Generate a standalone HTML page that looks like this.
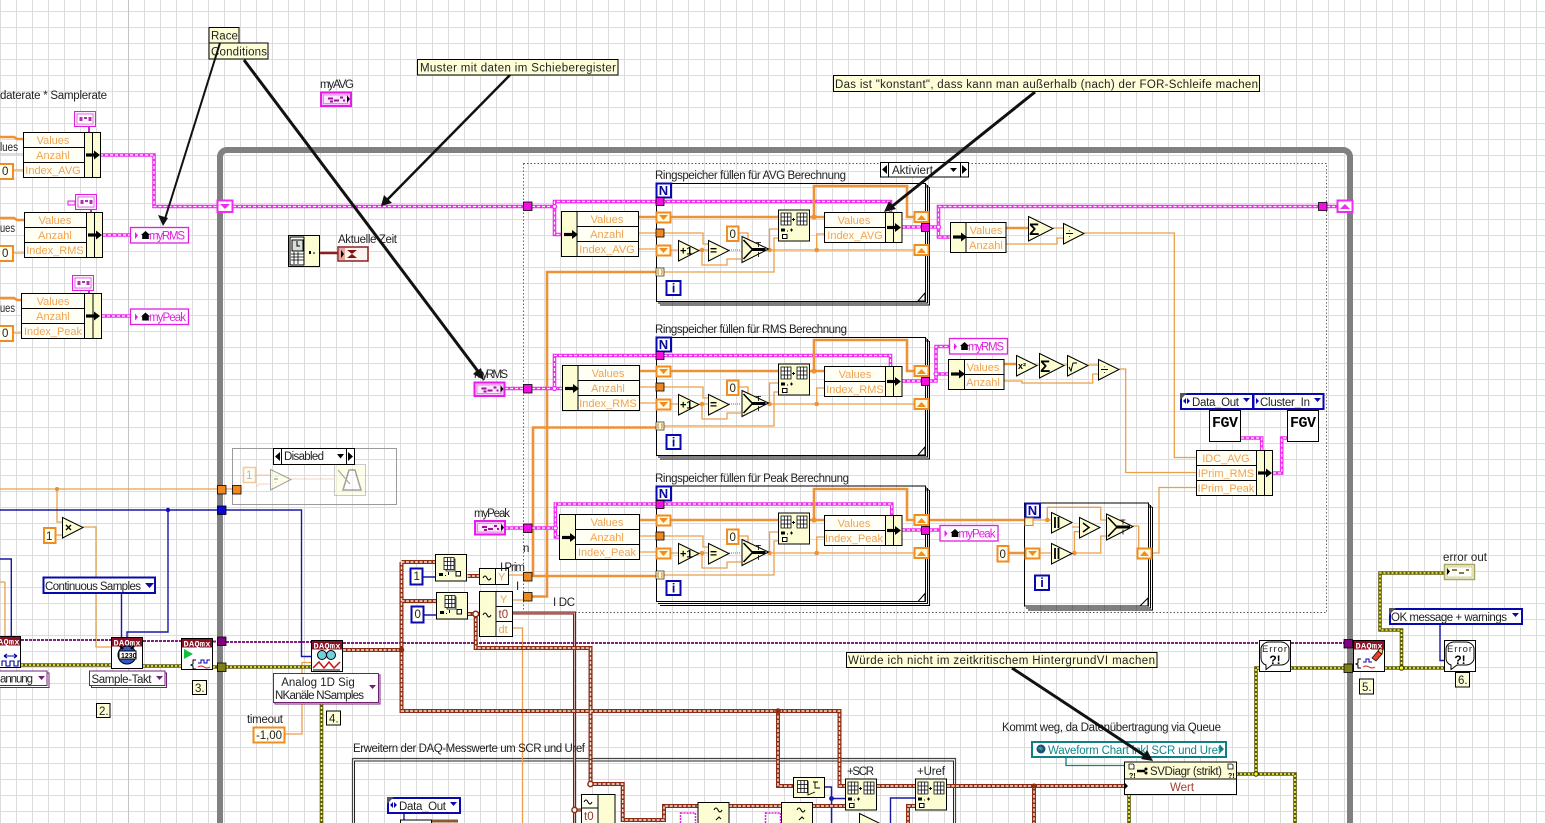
<!DOCTYPE html>
<html><head><meta charset="utf-8"><style>
html,body{margin:0;padding:0;background:#fff}
body{width:1545px;height:823px;overflow:hidden;background-color:#fff;background-image:linear-gradient(to right,#dcdcdc 1px,transparent 1px),linear-gradient(to bottom,#dcdcdc 1px,transparent 1px);background-size:16px 16px;background-position:0 11px}
svg{display:block;position:absolute;left:0;top:0}
text{font-family:"Liberation Sans",sans-serif;font-size:11.5px;fill:#222}
.m{text-anchor:middle}.o{fill:#f0a352;font-size:11px}.mg{fill:#e020e0}.bl{fill:#111}
.bd{font-weight:bold;fill:#000}
.cr{fill:#fdfdd4;stroke:#000}.wc{fill:#fffff6;stroke:#000}.b{fill:none;stroke:#000}
.n{fill:#fdfdd8;stroke:#000}
.c{fill:#fffff2;stroke:#f08c20;stroke-width:2}
.cb{fill:#fffff2;stroke:#0808b0;stroke-width:2}
.e{fill:#fff;stroke:#0808b0;stroke-width:2}
.tri{fill:#fdfdd4;stroke:#000}
.pk{fill:none;stroke:#f02cf0;stroke-width:3.6}.pk2{fill:none;stroke:#fff;stroke-width:1.2;stroke-dasharray:3 2}
.br{fill:none;stroke:#8c2c14;stroke-width:4}.br2{fill:none;stroke:#f7e6d8;stroke-width:1.4;stroke-dasharray:3 1.5}
.ye{fill:none;stroke:#5c5c10;stroke-width:3.6}.ye2{fill:none;stroke:#ffff40;stroke-width:1.6;stroke-dasharray:2 2}
.pu{fill:none;stroke:#80207f;stroke-width:2;stroke-dasharray:3 1}
.ot{fill:none;stroke:#eb9f4a;stroke-width:1.3}
.oT{fill:none;stroke:#ee9238;stroke-width:2.6}
.bw{fill:none;stroke:#1818a8;stroke-width:1.4}
.to{fill:#f08820;stroke:#000;stroke-width:.8}
.tp{fill:#f010e0;stroke:#000;stroke-width:.8}
.sr{fill:#fffbe0;stroke:#f08c20;stroke-width:2}
.sa{fill:#f08c20}
.ar{stroke:#111;fill:none}
.hd{fill:#fff;font-size:8.5px;font-weight:bold;font-family:"Liberation Mono",monospace;text-anchor:middle}
</style></head><body>
<svg width="1545" height="823" viewBox="0 0 1545 823">
<defs>
<path id="w-pk" d="M100 155H154V206.5H217M103 235H130M102 316H130M233 206.5H523M532 206.5H554.5V201.5H890.5V212M554.5 206.5V234.5H561M902 227H921M929 227H938.5V206.5H1318M938.5 227V237H950M1327 206.5H1337M505 388.5H523M532 388.5H554.5V355.5H890.5V366M554.5 388.5H562M902 381H921M929 381H936V346.5H949M936 374H948M505 528H523M532 528H555.4V504H891.8V515M555.4 528V537H559M902 530H921M929 530H940M1241 438H1261.7V450M1273 473H1281.7V438H1287"/>
<path id="w-br" d="M343 650H401.5M401.5 562V711H839.5V786H845M401.5 562H435M401.5 601H436M778 711V786H793M877 786H915M947 786H1124M1034 786V823M467.5 576H479M467.5 614H479M475.7 614V648H590.5V784H622.7V820H664V806H698M729 806H781M812 806H845M915 806H908V823"/>
<path id="w-ye" d="M21 665H111M143 666H181M213 667H217M226 667H311M321.5 703V823M1259 668H1256V774M1236 774H1295V823M1129 795V823M1290 668H1344M1385 668H1444M1401.5 668V630H1380V573H1444"/>
<g id="term"><rect x="1" y="1" width="30" height="13.5" fill="#f8c8f8" stroke="#e81ce8" stroke-width="2"/><rect x="3.5" y="3.5" width="24" height="8.5" fill="#ffe6ff" stroke="#d850d8" stroke-width=".6"/><path d="M8 6h5v2H8zM14 8h5v2h-5zM10 9h3v2h-3zM20 5h3v2h-3zM23 8h2v2h-2z" fill="#a010a0"/><path d="M27 4l3 3.5-3 3.5z" fill="#000"/></g>
<g id="lv"><rect x=".5" y=".5" width="21" height="15" fill="#fde8fd" stroke="#e020e0"/><rect x="3" y="3" width="16" height="10" fill="#fff" stroke="#d040d0" stroke-width=".7"/><path d="M5.5 6h3v4h-3zM10 6h3v2h-3zM14.5 6h3v4h-3z" fill="#b030b0"/></g>
<g id="arw"><path d="M0 0h10" stroke="#000" stroke-width="3.2"/><path d="M8 -4.5l6 4.5-6 4.5z" fill="#000"/></g>
<g id="gr"><path d="M.5.5h10v12H.5zM.5 4.5h10M.5 8.5h10M3.8.5v12M7.2.5v12" fill="#fff" stroke="#000" stroke-width=".8"/></g>
<g id="ra"><rect x=".5" y=".5" width="31" height="31" class="cr"/><use href="#gr" x="2.5" y="3"/><use href="#gr" x="18.5" y="3"/><path d="M14 10h3M15.5 8.5v3" stroke="#000"/><path d="M3 19h4v3H3z" fill="#000"/><path d="M9 21h1v1H9zM13 19h1v3h-1zM12 20h3v1h-3z" fill="#000"/><rect x="4.5" y="26" width="4.5" height="4" fill="#fff" stroke="#000" transform="translate(0 -1)"/></g>
<g id="ia"><rect x=".5" y=".5" width="31" height="26.5" class="cr"/><path d="M11 5h9v12h-9z" fill="#fff" stroke="#000" stroke-width=".7"/><path d="M9 3.5h10v12H9zM9 7.5h10M9 11.5h10M12.4 3.5v12M15.8 3.5v12" fill="#fff" stroke="#000" stroke-width=".8"/><path d="M4 19h4v3H4zM10 21h1v1h-1zM13 18h1v3h-1z" fill="#000"/><rect x="21" y="17.5" width="4.5" height="4.5" fill="#fff" stroke="#000"/></g>
<g id="sel"><path d="M.5.5L27 13 .5 26.5z" class="tri"/><path d="M2 4l9 9.5L2 23" fill="none" stroke="#000" stroke-width="1.6"/><path d="M10 13.5h14" stroke="#000" stroke-width="3"/><path d="M17 6v5M14.5 6.5h5M17 16v5" stroke="#000" stroke-width=".8" fill="none"/></g>
<g id="err"><rect x=".5" y=".5" width="31" height="31" fill="#fff" stroke="#000"/><path d="M7 25c-3-1-5-3-5-7V9c0-4 4-7 8-7h12c4 0 8 3 8 7v9c0 4-4 7-8 7h-9l-6 4.500z" fill="#fff" stroke="#000"/></g>
<g id="dq"><rect x=".5" y=".5" width="31" height="31" fill="#fff" stroke="#000"/><rect x="1" y="1" width="30" height="8.500" fill="#8a1024"/></g>
</defs>

<path d="M128.500 0V823" stroke="#c4c4c4"/>

<!-- frames -->
<path d="M220 823V157a7 7 0 0 1 7-7H1343a7 7 0 0 1 7 7V823" fill="none" stroke="#808080" stroke-width="6"/>
<rect x="523.500" y="163.500" width="803" height="449" fill="none" stroke="#555" stroke-dasharray="1.500 2" stroke-width=".9"/>
<path d="M352.500 823V758.500H955.500V823" fill="none" stroke="#444" stroke-width="1.200"/><path d="M354.500 823V761H953.500V823" fill="none" stroke="#222"/>
<rect x="232.500" y="448.500" width="164" height="56" fill="none" stroke="#9a9a9a"/>

<!-- thin wires -->
<path class="ot" d="M0 489H217M226 489H232M57 489V522H62M55 535H62M83 527H96V647H111M5 582H0M5 582V636M285 734H302V662.500H311M512.500 628H522.500V823M1084 233H1174.300V457.500H1196M1006 244H1057V238H1063M1053 228H1063M1119 369H1125.700V472.500H1196M1004 381H1022V383H1092.700V374H1098M1037 365H1039M1064 365H1067M1088 365H1098M1196 487.500H1159V553H1152M509 575H523M512.500 600H523M1033 520H1051M1047.300 520V507.300H1100.800V520H1106M1040 553H1051M1072 553H1100.800V536H1106M1074.400 553V531.700H1079M1072 527H1079M1133 526H1138.700V548"/>
<path class="oT" d="M532 576H656M533 576V427.500H656M532 596.500H547V272H656M1006 228H1028M1004 364H1016M1008 553H1025M929 520H1025M0 137H14L17 139H24M0 218H14L17 220H24M0 298H14L17 300H22"/>
<path class="ot" d="M13 170H23M13 253H24M13 333H21"/>
<path class="bw" d="M0 510H217M226 510H301.500V656.500H311M168 510V632H127V637M121.500 593V637M0 559H11.300V636M423 577H436M423 615H436M825 787H831.500V823M831.500 798.500H845M915 798H890.500V823M1440 624V660.500H1444M404 813V820"/>
<path d="M1066 757V765.500H1124" fill="none" stroke="#108080" stroke-width="1.300"/>
<path class="pu" d="M21 640H111M143 641H181M213 641.500H217M226 642H311M343 643H1344"/>
<path d="M319 253H338" stroke="#8a2020" stroke-width="2.500"/>
<path d="M512.500 613H574.500V823M574.500 810H581" fill="none" stroke="#7a1a10" stroke-width="3"/>
<path d="M512.500 613H574.500V823M574.500 810H581" fill="none" stroke="#f0d8d0" stroke-width=".8"/>

<!-- big wires -->
<use href="#w-ye" class="ye"/><use href="#w-ye" class="ye2"/>
<use href="#w-br" class="br"/><use href="#w-br" class="br2"/>
<use href="#w-pk" class="pk"/><use href="#w-pk" class="pk2"/>
<path d="M432 821h26" stroke="#8c5a30" stroke-width="3"/>

<!-- top-left -->
<text x="0" y="99" textLength="107">daterate * Samplerate</text>
<path d="M0 154H23" stroke="#aaa" stroke-width=".8"/><text x="0" y="151" textLength="18" lengthAdjust="spacingAndGlyphs">lues</text>
<text x="0" y="232" textLength="15" lengthAdjust="spacingAndGlyphs">ues</text>
<text x="0" y="312" textLength="15" lengthAdjust="spacingAndGlyphs">ues</text>
<rect x="-3" y="164" width="16" height="15" class="c"/><text x="2" y="175">0</text>
<rect x="-3" y="246" width="16" height="15" class="c"/><text x="2" y="257">0</text>
<rect x="-3" y="326" width="16" height="15" class="c"/><text x="2" y="337">0</text>

<use href="#lv" x="74" y="111"/><path d="M89 127v6" stroke="#e020e0" stroke-width="2"/>
<use href="#lv" x="75" y="194"/><path d="M68 201h7v4h-7z" fill="#fde8fd" stroke="#e020e0"/><path d="M91 210v3" stroke="#e020e0" stroke-width="2"/>
<use href="#lv" x="72" y="275"/><path d="M89 291v3" stroke="#e020e0" stroke-width="2"/>

<!-- left bundles -->
<rect x="23.500" y="132.500" width="77" height="45" class="cr"/><rect x="23.500" y="132.500" width="61" height="45" class="wc"/><path class="b" d="M23.500 147.500h61M23.500 162.500h61M92.500 132.500v45"/>
<text class="o m" x="53" y="144">Values</text><text class="o m" x="53" y="159">Anzahl</text><text class="o m" x="53" y="174">Index_AVG</text>
<use href="#arw" x="86" y="155"/>
<rect x="24.500" y="212.500" width="78" height="45" class="cr"/><rect x="24.500" y="212.500" width="62" height="45" class="wc"/><path class="b" d="M24.500 227.500h62M24.500 242.500h62M94.500 212.500v45"/>
<text class="o m" x="55" y="224">Values</text><text class="o m" x="55" y="239">Anzahl</text><text class="o m" x="55" y="254">Index_RMS</text>
<use href="#arw" x="88" y="235"/>
<rect x="21.500" y="293.500" width="80" height="45" class="cr"/><rect x="21.500" y="293.500" width="63" height="45" class="wc"/><path class="b" d="M21.500 308.500h63M21.500 323.500h63M93 293.500v45"/>
<text class="o m" x="53" y="305">Values</text><text class="o m" x="53" y="320">Anzahl</text><text class="o m" x="53" y="335">Index_Peak</text>
<use href="#arw" x="86" y="316"/>

<!-- locals -->
<rect x="130.500" y="227.500" width="58" height="15.500" fill="#fffaff" stroke="#e020e0" stroke-width="1.300"/><path d="M135 232l3 3.500-3 3.500z" fill="#e020e0"/><path d="M141 235l4.500-4 4.500 4h-1.200v4h-6.600v-4z" fill="#000"/><text class="mg" x="149" y="239.500" textLength="36">myRMS</text>
<rect x="130.500" y="309" width="58" height="15.500" fill="#fffaff" stroke="#e020e0" stroke-width="1.300"/><path d="M135 313.500l3 3.500-3 3.500z" fill="#e020e0"/><path d="M141 316.500l4.500-4 4.500 4h-1.200v4h-6.600v-4z" fill="#000"/><text class="mg" x="149" y="321" textLength="37">myPeak</text>
<rect x="949.500" y="338.500" width="58" height="15.500" fill="#fffaff" stroke="#e020e0" stroke-width="1.300"/><path d="M954 343l3 3.500-3 3.500z" fill="#e020e0"/><path d="M960 346l4.500-4 4.500 4h-1.200v4h-6.600v-4z" fill="#000"/><text class="mg" x="968" y="350.500" textLength="36">myRMS</text>
<rect x="940" y="525.500" width="58" height="15.500" fill="#fffaff" stroke="#e020e0" stroke-width="1.300"/><path d="M944.500 530l3 3.500-3 3.500z" fill="#e020e0"/><path d="M950.500 533l4.500-4 4.500 4h-1.200v4h-6.600v-4z" fill="#000"/><text class="mg" x="958.500" y="537.500" textLength="37">myPeak</text>

<!-- terminals -->
<text x="320" y="88" textLength="34">myAVG</text><use href="#term" x="320" y="91.500"/>
<text x="474" y="378" textLength="34">myRMS</text><use href="#term" x="473.500" y="381.500"/>
<text x="474" y="517" textLength="36">myPeak</text><use href="#term" x="474" y="520"/>

<!-- Aktuelle Zeit -->
<rect x="288.500" y="235.500" width="31" height="31" fill="#fdfdd4" stroke="#000"/><rect x="290" y="237" width="14" height="28" fill="#fff" stroke="#000"/><rect x="292" y="240" width="11" height="11" fill="#d8e0d8" stroke="#000"/><path d="M297 241v5h3" stroke="#000" fill="none"/><path d="M291 254h13M291 257h13M291 260h13M294 252v12M298 252v12" stroke="#000" stroke-width=".8"/><path d="M309 251h2v3h-2zM313 252.500h2v1h-2z" fill="#000"/>
<text x="338" y="243" textLength="59">Aktuelle Zeit</text>
<rect x="338" y="247" width="30" height="14" fill="#fdf4f0" stroke="#8a2020" stroke-width="1.500"/><rect x="339" y="248" width="6" height="12" fill="#e8a8a0"/><path d="M341 250l3 4-3 4z" fill="#000"/><path d="M347 250h10l-5 4 5 4h-10l5-4z" fill="#8a1010"/>

<!-- Disabled structure -->
<g opacity=".45"><rect x="243.500" y="467.500" width="12" height="15" fill="#fffff2" stroke="#f08c20" stroke-width="1.600"/><text x="246" y="479" style="fill:#666">1</text><path d="M256 475h14M256 486h1l2-2h11M291 479h43" fill="none" stroke="#f0a070"/><path d="M270.500 469.500L291 479.500 270.500 490z" fill="#fdfdd4" stroke="#333"/><path d="M274 479h4M276 476v.5M276 482v.5" stroke="#000"/><rect x="334.500" y="464.500" width="31" height="31" fill="#fdfdd4" stroke="#888"/><path d="M343 490l6-20h6l6 20z" fill="#fff" stroke="#333" stroke-width="1.500"/><path d="M338 470l12 14" stroke="#333"/></g>
<rect x="273.500" y="448.500" width="81" height="16" fill="#fff" stroke="#000"/><path d="M281.500 448.500v16M346.500 448.500v16" stroke="#000"/><path d="M280 452v9l-5-4.500zM348 452v9l5-4.500zM337 454h7l-3.500 4.500z" fill="#000"/><text x="284" y="460" textLength="40">Disabled</text>

<rect x="217.500" y="485.500" width="8.500" height="8.500" class="to"/><rect x="232.500" y="485.500" width="8.500" height="8.500" class="to"/>
<rect x="217.500" y="506" width="8.500" height="8.500" fill="#0808d0" stroke="#000" stroke-width=".8"/>
<rect x="217.500" y="637" width="8.500" height="8.500" fill="#800080" stroke="#000" stroke-width=".8"/>
<rect x="217.500" y="663" width="8.500" height="8.500" fill="#808018" stroke="#000" stroke-width=".8"/>
<circle cx="57" cy="489" r="2" fill="#e09030"/><circle cx="168" cy="510" r="2.200" fill="#1010c0"/>

<!-- mult / const -->
<rect x="44" y="528" width="11.500" height="15" class="c"/><text x="46" y="540">1</text>
<path d="M62.500 517.500L83 527.500 62.500 538z" class="tri"/><path d="M66 525l5 5M71 525l-5 5" stroke="#000" stroke-width="1.300"/>
<rect x="43.500" y="577.500" width="111.500" height="15.500" class="e"/><text x="45" y="590" textLength="96">Continuous Samples</text><path d="M145 583h9l-4.500 5z" fill="#0808b0"/>

<!-- DAQmx icons -->
<use href="#dq" x="-11" y="636"/><text class="hd" x="6" y="644.500" textLength="27">DAQmx</text><path d="M2 666v-5h4v5h4v-5h4v5h4v-5h3M4 656h13M4 656l3-2M4 656l3 2M17 656l-3-2M17 656l-3 2" fill="none" stroke="#0000a0" stroke-width="1.100"/>
<use href="#dq" x="111" y="637"/><text class="hd" x="127" y="645.500" textLength="27">DAQmx</text><circle cx="127" cy="655" r="9" fill="#3058c8" stroke="#000"/><rect x="119" y="651" width="17" height="8" fill="#fff" stroke="#000"/><text x="121" y="658" style="font-size:7px;font-weight:bold;fill:#000">1230</text><path d="M120 646l3 3M134 646l-3 3" stroke="#000" stroke-width="2"/>
<use href="#dq" x="181" y="638"/><text class="hd" x="197" y="646.500" textLength="27">DAQmx</text><path d="M184 649l9 5-9 5z" fill="#10c040"/><path d="M196 660h-3v4l-2 1 2 1v3h3" fill="none" stroke="#000"/><path d="M198 663h3v-3h3v3h3v-3h3" fill="none" stroke="#0000b0"/><path d="M198 667q3-2 6 0t6 0" fill="none" stroke="#d02020"/>
<use href="#dq" x="311" y="640"/><text class="hd" x="327" y="648.500" textLength="27">DAQmx</text><circle cx="322" cy="655" r="4.500" fill="#70d0e0" stroke="#000"/><circle cx="331" cy="655" r="4.500" fill="#70d0e0" stroke="#000"/><path d="M313 668l6-6 5 6 5-6 5 6 6-6" fill="none" stroke="#d01010" stroke-width="1.500"/><path d="M313 670h27" stroke="#000"/>
<use href="#dq" x="1353" y="640"/><text class="hd" x="1369" y="648.500" textLength="27">DAQmx</text><path d="M1372 658l6-7 4 3-6 7z" fill="#f04030" stroke="#000" stroke-width=".7"/><path d="M1378 651l2-3 3 2-1 4z" fill="#f8d060" stroke="#000" stroke-width=".7"/><path d="M1361 659h-3v4l-2 1 2 1v3h3" fill="none" stroke="#000"/><path d="M1363 662h3v-3h3v3h3" fill="none" stroke="#0000b0"/><path d="M1363 667q3-2 6 0t6 0" fill="none" stroke="#d02020"/>

<!-- polymorphic dropdowns -->
<rect x="-4" y="673" width="53" height="14.500" fill="#fff" stroke="#702070"/><rect x="-4" y="671" width="51" height="14.500" fill="#fff" stroke="#702070"/><text x="0" y="682.500" textLength="33">annung</text><path d="M38 676h7l-3.500 4z" fill="#702070"/>
<rect x="91.500" y="673" width="75" height="14.500" fill="#fff" stroke="#702070"/><rect x="89.500" y="671" width="75.500" height="14.500" fill="#fff" stroke="#702070"/><text x="91.500" y="683" textLength="60">Sample-Takt</text><path d="M156 676h7l-3.500 4z" fill="#702070"/>
<rect x="275" y="675" width="105" height="29" fill="#fff" stroke="#702070"/><rect x="273.500" y="673.500" width="105" height="29" fill="#fff" stroke="#702070"/><text class="m" x="318" y="686">Analog 1D Sig</text><text class="m" x="319.500" y="699" textLength="89">NKanäle NSamples</text><path d="M369 685h7l-3.500 4z" fill="#702070"/>

<!-- number notes -->
<rect x="96.500" y="703.500" width="13.500" height="14" class="n"/><text x="99" y="715">2.</text>
<rect x="192.500" y="680.500" width="14" height="14" class="n"/><text x="195" y="692">3.</text>
<rect x="326.500" y="711" width="14" height="14" class="n"/><text x="329" y="722.500">4.</text>
<rect x="1359.500" y="679" width="14" height="15" class="n"/><text x="1362" y="691">5.</text>
<rect x="1455.500" y="672.500" width="14" height="14.500" class="n"/><text x="1458" y="684">6.</text>
<text x="247" y="723" textLength="36">timeout</text>
<rect x="253.500" y="727.500" width="31" height="15" class="c"/><text x="256" y="739" textLength="26">-1,00</text>

<!-- index arrays & waveform -->
<use href="#ia" x="435" y="554"/><use href="#ia" x="436" y="592"/>
<rect x="410.500" y="568.500" width="12" height="16" class="cb"/><text x="413.500" y="580">1</text>
<rect x="411.500" y="606.500" width="12" height="16" class="cb"/><text x="414.500" y="618">0</text>
<rect x="479.500" y="568.500" width="29" height="16" class="cr"/><rect x="495.500" y="568.500" width="13" height="16" fill="#fffff6" stroke="#000"/><path d="M483 578q2-4 4 0t4 0" fill="none" stroke="#000"/><text class="o" x="498" y="580.500">Y</text>
<rect x="479.500" y="591.500" width="33" height="45" class="cr"/><rect x="496" y="591.500" width="16.500" height="45" fill="#fffff6" stroke="#000"/><path d="M496 606.500h16.500M496 621.500h16.500" stroke="#000"/><path d="M483 615q2-4 4 0t4 0" fill="none" stroke="#000"/><text class="o" x="500" y="603">Y</text><text x="498.500" y="618" style="fill:#9a3030">t0</text><text class="o" x="498.500" y="633">dt</text>
<text x="500" y="571" textLength="25">I Prim</text><text x="516" y="590">I</text><text x="523" y="552">n</text><text x="553" y="606" textLength="22">I DC</text>

<rect x="523.500" y="572.500" width="8.500" height="8.500" class="to"/><rect x="523.500" y="592.500" width="8.500" height="8.500" class="to"/>
<rect x="523.500" y="202" width="8.500" height="8.500" class="tp"/><rect x="523.500" y="384.500" width="8.500" height="8.500" class="tp"/><rect x="523.500" y="524" width="8.500" height="8.500" class="tp"/><rect x="1318.500" y="202.500" width="8.500" height="8" class="tp"/>

<!-- loop frames -->
<path class="b" d="M656.500 183.500H925.500V301.500H656.500ZM927.500 185V303H658M929.500 187V305H660M925 185h2M925 187h4M918 301l7-8v8z"/>
<path class="b" d="M656.500 337.500H925.500V455.500H656.500ZM927.500 339V457H658M929.500 341V459H660M925 339h2M925 341h4M918 455l7-8v8z"/>
<path class="b" d="M656.500 486H925.500V601.500H656.500ZM927.500 488V603.500H658M929.500 490V605.500H660M925 488h2M925 490h4M918 601.500l7-8v8z"/>
<path class="b" d="M1024.500 503H1148.500V606H1024.500ZM1150.500 505V608H1026M1152.500 507V610H1028M1148 505h2M1148 507h4M1140 606l8-8v8z"/>
<text x="655" y="179" textLength="191">Ringspeicher füllen für AVG Berechnung</text>
<text x="655" y="333" textLength="192">Ringspeicher füllen für RMS Berechnung</text>
<text x="655" y="482" textLength="194">Ringspeicher füllen für Peak Berechnung</text>

<g id="L">
<path class="oT" d="M639 217H656M671 217H778M810 217H824M814 217V186H907V217H914"/>
<path class="ot" d="M639 233H656M664 233H703V244H708M639 249H656M671 250H678M699 250H708M702 250V265H727V259H741M739 233H748V240M768 250H914M769.500 250V229H778M816.700 250V234H824M664 272H774V238H778"/>
<path d="M729 250H741" stroke="#20a040" stroke-dasharray="1 1"/>
<circle cx="702" cy="250" r="2.300" fill="#ee9238"/><circle cx="769.500" cy="250" r="2.300" fill="#ee9238"/><circle cx="816.700" cy="250" r="2.300" fill="#ee9238"/><circle cx="814" cy="217" r="2.600" fill="#ee9238"/>
<rect x="656.500" y="183.500" width="14.500" height="14" class="e" style="fill:#fff"/><text class="m" x="663.500" y="195" style="font-weight:bold;font-size:13px;fill:#0808a0">N</text>
<rect x="656" y="197.500" width="8" height="8" class="tp"/>
<rect x="656.500" y="212.500" width="14" height="10" class="sr"/><path class="sa" d="M659 215h9l-4.500 5z"/>
<rect x="656.500" y="245.500" width="14" height="10" class="sr"/><path class="sa" d="M659 248h9l-4.500 5z"/>
<rect x="656" y="229" width="8" height="8" class="to"/>
<rect x="656" y="268" width="8" height="8" fill="#fdfdd4" stroke="#222" stroke-width=".7"/><path d="M659 270h-1v4h1M661 270h1v4h-1" stroke="#e08020" fill="none"/>
<path d="M678.500 240.500L699 250.500 678.500 261z" class="tri"/><text class="bd" x="680" y="254.500" style="font-size:11px">+1</text>
<path d="M708.500 240.500L729 250.500 708.500 261z" class="tri"/><text class="bd" x="710" y="254.500" style="font-size:12px">=</text>
<rect x="727" y="226.500" width="11.500" height="14.500" class="c"/><text x="729.500" y="238">0</text>
<use href="#sel" x="741.500" y="236"/>
<use href="#ra" x="778" y="209.500"/>
<rect x="824.500" y="212.500" width="77.500" height="30" class="cr"/><rect x="824.500" y="212.500" width="61" height="30" class="wc"/><path class="b" d="M824.500 227.500h61M893.500 212.500v30"/>
<use href="#arw" x="887" y="227.500"/>
<rect x="914.500" y="212" width="14" height="10" class="sr"/><path class="sa" d="M917 220h9l-4.500-5z"/>
<rect x="914.500" y="245" width="14" height="10" class="sr"/><path class="sa" d="M917 253h9l-4.500-5z"/>
<rect x="921.500" y="223.500" width="8" height="8" class="tp"/>
</g>
<use href="#L" y="154"/><use href="#L" y="303"/>
<text class="o m" x="854" y="224">Values</text><text class="o m" x="855" y="239">Index_AVG</text>
<text class="o m" x="855" y="378">Values</text><text class="o m" x="855" y="393">Index_RMS</text>
<text class="o m" x="854" y="527">Values</text><text class="o m" x="854" y="542">Index_Peak</text>
<rect x="666.500" y="281" width="14" height="14" class="e"/><text class="m" x="673.500" y="292.500" style="font-weight:bold;font-size:13px;fill:#0808a0">i</text>
<rect x="666.500" y="435" width="14" height="14" class="e"/><text class="m" x="673.500" y="446.500" style="font-weight:bold;font-size:13px;fill:#0808a0">i</text>
<rect x="666.500" y="581" width="14" height="14" class="e"/><text class="m" x="673.500" y="592.500" style="font-weight:bold;font-size:13px;fill:#0808a0">i</text>

<!-- unbundles -->
<rect x="561.500" y="211.500" width="77" height="45" class="cr"/><rect x="577" y="211.500" width="61.500" height="45" class="wc"/><path class="b" d="M577 226.500h61.500M577 241.500h61.500"/><use href="#arw" x="564" y="234.500"/>
<text class="o m" x="607" y="223">Values</text><text class="o m" x="607" y="238">Anzahl</text><text class="o m" x="607" y="253">Index_AVG</text>
<rect x="562.500" y="365.500" width="77" height="45" class="cr"/><rect x="578" y="365.500" width="61.500" height="45" class="wc"/><path class="b" d="M578 380.500h61.500M578 395.500h61.500"/><use href="#arw" x="565" y="388.500"/>
<text class="o m" x="608" y="377">Values</text><text class="o m" x="608" y="392">Anzahl</text><text class="o m" x="608" y="407">Index_RMS</text>
<rect x="559.500" y="514.500" width="80" height="45" class="cr"/><rect x="575.500" y="514.500" width="64" height="45" class="wc"/><path class="b" d="M575.500 529.500h64M575.500 544.500h64"/><use href="#arw" x="562" y="537.500"/>
<text class="o m" x="607" y="526">Values</text><text class="o m" x="607" y="541">Anzahl</text><text class="o m" x="607" y="556">Index_Peak</text>

<!-- AVG calc -->
<rect x="950.500" y="222.500" width="55.500" height="30" class="cr"/><rect x="966" y="222.500" width="40" height="30" class="wc"/><path class="b" d="M966 237.500h40"/><use href="#arw" x="953" y="237"/>
<text class="o m" x="986" y="234">Values</text><text class="o m" x="986" y="249">Anzahl</text>
<path d="M1028.500 216.500L1053 228.500 1028.500 241z" class="tri"/><text class="bd" x="1029" y="235" style="font-size:17px">Σ</text>
<path d="M1063.500 223.500L1084 233.500 1063.500 244z" class="tri"/><path d="M1066 233.500h7M1069.500 230.500v.8M1069.500 236v.8" stroke="#000"/>
<!-- RMS calc -->
<rect x="948.500" y="359.500" width="55.500" height="30" class="cr"/><rect x="964.500" y="359.500" width="39.500" height="30" class="wc"/><path class="b" d="M964.500 374.500h39.500"/><use href="#arw" x="951" y="374"/>
<text class="o m" x="983" y="371">Values</text><text class="o m" x="983" y="386">Anzahl</text>
<path d="M1016.500 355.500L1037 365.500 1016.500 376z" class="tri"/><text class="bd" x="1018" y="369" style="font-size:9px">x²</text>
<path d="M1039.500 353.500L1064 365.500 1039.500 378z" class="tri"/><text class="bd" x="1040" y="372" style="font-size:17px">Σ</text>
<path d="M1067.500 355.500L1088 365.500 1067.500 376z" class="tri"/><path d="M1069 367l2 4 2-8h4" fill="none" stroke="#000"/>
<path d="M1098.500 359.500L1119 369.500 1098.500 380z" class="tri"/><path d="M1101 369.500h7M1104.500 366.500v.8M1104.500 372v.8" stroke="#000"/>

<!-- FGV -->
<rect x="1209.500" y="410.500" width="31" height="31" fill="#fff" stroke="#000"/><text class="bd" x="1212" y="427" textLength="26" style="font-family:'Liberation Mono',monospace;font-size:15px">FGV</text>
<rect x="1287.500" y="410.500" width="31" height="31" fill="#fff" stroke="#000"/><text class="bd" x="1290" y="427" textLength="26" style="font-family:'Liberation Mono',monospace;font-size:15px">FGV</text>
<rect x="1181" y="394" width="72" height="15" class="e"/><path d="M1180 393h7l-7 7z" fill="#555"/><path d="M1183 401l3-3v6zM1190 401l-3-3v6z" fill="#0808b0"/><text x="1192" y="406" textLength="47">Data_Out</text><path d="M1243 398h7l-3.500 4z" fill="#0808b0"/>
<rect x="1253.500" y="394" width="70" height="15" class="e"/><path d="M1256 398v6l3-3z" fill="#0808b0"/><text x="1260" y="406" textLength="50">Cluster_In</text><path d="M1314 398h7l-3.500 4z" fill="#0808b0"/>
<rect x="1196.500" y="450.500" width="76" height="45" class="cr"/><rect x="1196.500" y="450.500" width="60" height="45" class="wc"/><path class="b" d="M1196.500 465.500h60M1196.500 480.500h60M1264.500 450.500v45"/><use href="#arw" x="1258" y="473"/>
<text class="o m" x="1226" y="462">IDC_AVG</text><text class="o m" x="1226" y="477">IPrim_RMS</text><text class="o m" x="1226" y="492">IPrim_Peak</text>

<!-- for loop 4 -->
<rect x="997.500" y="546" width="11" height="15.500" class="c"/><text x="999.500" y="558">0</text>
<rect x="1025.500" y="503.500" width="14.500" height="14" class="e"/><text class="m" x="1032.500" y="515" style="font-weight:bold;font-size:13px;fill:#0808a0">N</text>
<rect x="1025" y="518" width="8" height="7.500" fill="#fdfdd4" stroke="#e08020"/>
<circle cx="1047.300" cy="520" r="2.300" fill="#ee9238"/><circle cx="1074.400" cy="553" r="2.300" fill="#ee9238"/>
<path d="M1051.500 512.500L1072 522.500 1051.500 533z" class="tri"/><path d="M1055 517v11M1058.500 517v11" stroke="#000" stroke-width="1.800"/>
<path d="M1051.500 543.500L1072 553.500 1051.500 564z" class="tri"/><path d="M1055 548v11M1058.500 548v11" stroke="#000" stroke-width="1.800"/>
<path d="M1079.500 517.500L1100 527.500 1079.500 538z" class="tri"/><path d="M1083 523l6 4.500-6 4.500" fill="none" stroke="#000" stroke-width="1.500"/>
<use href="#sel" x="1106" y="513.500"/>
<rect x="1025.500" y="548.500" width="14" height="10" class="sr"/><path class="sa" d="M1028 551h9l-4.500 5z"/>
<rect x="1137.500" y="548.500" width="14" height="10" class="sr"/><path class="sa" d="M1140 556h9l-4.500-5z"/>
<rect x="1035" y="575.500" width="14" height="14.500" class="e"/><text class="m" x="1042" y="587" style="font-weight:bold;font-size:13px;fill:#0808a0">i</text>

<!-- bottom right -->
<use href="#err" x="1259" y="640"/><text x="1262" y="652" textLength="25" style="font-size:9.500px">Error</text><text class="bd m" x="1275" y="664" style="font-size:12px">?!</text>
<use href="#err" x="1444" y="640"/><text x="1447" y="652" textLength="25" style="font-size:9.500px">Error</text><text class="bd m" x="1460" y="664" style="font-size:12px">?!</text>
<rect x="1344" y="639.500" width="8.500" height="8.500" fill="#800080" stroke="#000" stroke-width=".8"/>
<rect x="1344" y="664" width="8.500" height="8.500" fill="#808018" stroke="#000" stroke-width=".8"/>
<circle cx="1401.500" cy="668" r="2.200" fill="#ff0" stroke="#222"/><circle cx="1256" cy="774" r="2.200" fill="#ff0" stroke="#222"/>
<text x="1443" y="561" textLength="44">error out</text>
<rect x="1444.500" y="564.500" width="30" height="15" fill="#f0f0c8" stroke="#a8a860" stroke-width="1.500"/><rect x="1447" y="567" width="25" height="10" fill="#fff" stroke="#b8b880" stroke-width=".6"/><path d="M1447 568l3 3.500-3 3.500z" fill="#000"/><path d="M1452 569h5v2h-5zM1459 572h5v2h-5zM1466 569h3v2h-3z" fill="#888040"/>
<rect x="1390" y="609" width="132" height="15" class="e"/><path d="M1389 608h7l-7 7z" fill="#555"/><text x="1391" y="621" textLength="116">OK message + warnings</text><path d="M1512 613h7l-3.500 4z" fill="#0808b0"/>
<text x="1002" y="731" textLength="219">Kommt weg, da Datenübertragung via Queue</text>
<rect x="1032" y="742" width="194" height="15" fill="#fff" stroke="#108080" stroke-width="2"/><circle cx="1041" cy="749" r="4.500" fill="#205080"/><path d="M1038 748q3-3 5 1-2 3-5-1" fill="#30a080"/><text x="1048" y="754" textLength="173" style="fill:#108888">Waveform Chart  inkl SCR und Uref</text><path d="M1220 745v8l4-4z" fill="#108080"/>
<rect x="1124.500" y="762" width="112" height="32.500" fill="#fff" stroke="#000"/><rect x="1124.500" y="762" width="112" height="17" fill="#fdfdd4" stroke="#000"/>
<path d="M1129 764h4l1 1v4h-5zM1228 764h4l1 1v4h-5z" fill="#fff" stroke="#000" stroke-width=".8"/><text x="1129" y="778" class="bd" style="font-size:7px">?!</text><text x="1228" y="778" class="bd" style="font-size:7px">?!</text>
<path d="M1137 771h8" stroke="#000" stroke-width="2.500"/><circle cx="1146" cy="769" r="1.500" fill="#000"/><circle cx="1146" cy="773" r="1.500" fill="#000"/>
<text x="1150" y="775" textLength="72">SVDiagr (strikt)</text><text class="m" x="1182" y="791" style="fill:#a04030">Wert</text><path d="M1125 783l3 3-3 3z" fill="#000"/>
<circle cx="1034" cy="786" r="2.500" fill="#8c2c14"/>

<!-- lower -->
<text x="353" y="752" textLength="232">Erweitern der DAQ-Messwerte um SCR und Uref</text>
<rect x="388" y="798" width="72" height="15" class="e"/><path d="M387 797h7l-7 7z" fill="#555"/><path d="M390 805l3-3v6zM397 805l-3-3v6z" fill="#0808b0"/><text x="399" y="810" textLength="47">Data_Out</text><path d="M450 802h7l-3.500 4z" fill="#0808b0"/>
<rect x="400.500" y="820" width="31" height="10" fill="#fff" stroke="#000"/>
<rect x="581.500" y="794.500" width="33.500" height="40" class="cr"/><rect x="581.500" y="794.500" width="16.500" height="13.500" fill="#fffff6" stroke="#000"/><rect x="581.500" y="808" width="16.500" height="20" fill="#fffff6" stroke="#000"/><path d="M584 802q2-4 4 0t4 0" fill="none" stroke="#000"/><text x="584" y="820" style="fill:#9a3030">t0</text>
<rect x="698" y="802.500" width="31" height="30" class="cr"/><path d="M714 810q2-4 4 0t4 0" fill="none" stroke="#000"/><path d="M716 820l3-3 2 2" stroke="#000" fill="none"/>
<rect x="781.500" y="802.500" width="31" height="30" class="cr"/><path d="M797 810q2-4 4 0t4 0" fill="none" stroke="#000"/><path d="M799 820l3-3 2 2" stroke="#000" fill="none"/>
<rect x="680.500" y="813" width="15" height="14" fill="none" stroke="#e020e0" stroke-width="1.500" stroke-dasharray="2 1"/><rect x="765.500" y="813" width="15" height="14" fill="none" stroke="#e020e0" stroke-width="1.500" stroke-dasharray="2 1"/>
<path d="M859.500 813.500L880 823.500 859.500 834z" class="tri"/>
<rect x="793.500" y="777.500" width="31" height="20" class="cr"/><use href="#gr" x="797" y="780"/><path d="M808 781v14l7-3M813 782h5M815 782v6h5" fill="none" stroke="#000" stroke-width=".9"/>
<use href="#ra" x="845" y="778.500"/><use href="#ra" x="915" y="778.500"/>
<text x="847" y="775" textLength="27">+SCR</text><text x="917" y="775" textLength="28">+Uref</text>
<circle cx="831.500" cy="798.500" r="2.400" fill="#1818b8"/>
<circle cx="401.500" cy="650" r="2.800" fill="#8c2c14"/><circle cx="778" cy="711" r="2.800" fill="#8c2c14"/><circle cx="475.700" cy="614" r="2.800" fill="#fff" stroke="#8c2c14" stroke-width="1.500"/><circle cx="590.500" cy="784" r="2.600" fill="#fff" stroke="#8c2c14" stroke-width="1.500"/><circle cx="574.500" cy="810" r="2.600" fill="#fff" stroke="#8c2c14" stroke-width="1.500"/>

<!-- Aktiviert -->
<rect x="880.500" y="162.500" width="88" height="14.500" fill="#fff" stroke="#000"/><path d="M888.500 162.500v14.500M960.500 162.500v14.500" stroke="#000"/><path d="M887 165v9l-5-4.500zM962 165v9l5-4.500zM950 168h7l-3.500 4z" fill="#000"/><text x="892" y="174" textLength="41">Aktiviert</text>

<!-- pink nodes -->
<g fill="#fff" stroke="#f02cf0" stroke-width="1.200"><circle cx="554.500" cy="206.500" r="2"/><circle cx="938.500" cy="227" r="2"/><circle cx="554.500" cy="388.500" r="2"/><circle cx="936" cy="374" r="2"/><circle cx="555.400" cy="528" r="2"/></g>
<!-- frame shift terminals -->
<rect x="217.500" y="200.500" width="15" height="11.500" fill="#fff" stroke="#f02cf0" stroke-width="2"/><path d="M220 204h10l-5 5z" fill="#f02cf0"/>
<rect x="1337.500" y="200.500" width="15" height="11.500" fill="#fff" stroke="#f02cf0" stroke-width="2"/><path d="M1340 209h10l-5-5z" fill="#f02cf0"/>

<!-- notes & arrows -->
<rect x="209" y="27.500" width="30" height="15.500" class="n"/><text x="211" y="39.500">Race</text>
<rect x="209" y="43" width="59" height="16" class="n"/><text x="211" y="55.500" textLength="56">Conditions</text>
<rect x="417.500" y="59.500" width="200.500" height="15.500" class="n"/><text x="420" y="71.500" textLength="196">Muster mit daten im Schieberegister</text>
<rect x="833.500" y="75.500" width="426" height="16" class="n"/><text x="835" y="88" textLength="423">Das ist "konstant", dass kann man außerhalb (nach) der FOR-Schleife machen</text>
<rect x="846.500" y="652.500" width="310.500" height="15" class="n"/><text x="848" y="664" textLength="307">Würde ich nicht im zeitkritischem HintergrundVI machen</text>
<path class="ar" stroke-width="2" d="M220 43L164 222"/><path d="M163 226l-5-11 10 3z" fill="#111"/>
<path class="ar" stroke-width="3" d="M244 60L480 374"/><path d="M484 380l-11-6 8-6z" fill="#111"/>
<path class="ar" stroke-width="2.500" d="M510 75L386 201"/><path d="M381 206l3-11 8 8z" fill="#111"/>
<path class="ar" stroke-width="3" d="M1035 92L890 208"/><path d="M884 212l5-11 7 8z" fill="#111"/>
<path class="ar" stroke-width="3" d="M1012 668L1147 757"/><path d="M1153 761l-12-2 6-9z" fill="#111"/>
</svg>
</body></html>
